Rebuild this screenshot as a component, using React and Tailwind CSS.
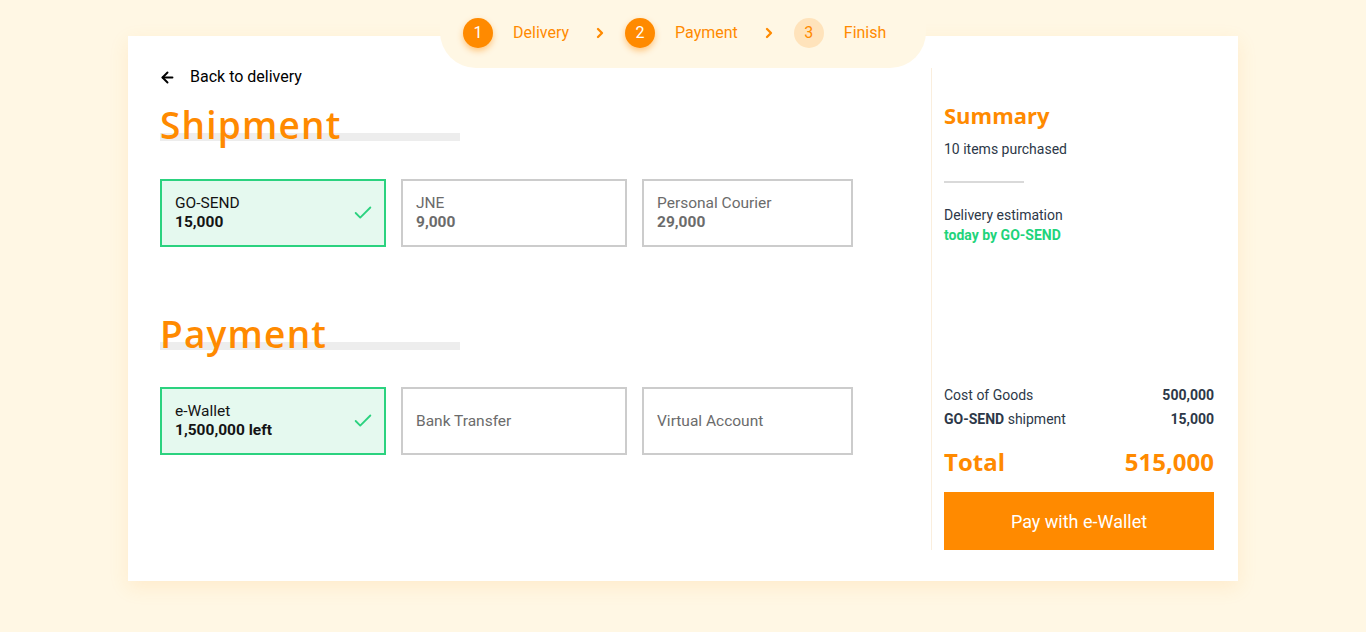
import React from 'react';
import { ArrowLeft, Check, ChevronRight } from 'lucide-react';

const heading = { fontFamily: '"Open Sans", sans-serif' };

const Step = ({ n, label, active }) => (
  <div className="flex items-center">
    <div
      className={
        active
          ? 'w-[30px] h-[30px] rounded-full bg-[#ff8a00] text-white flex items-center justify-center text-[16px] shadow-[0_3px_6px_rgba(255,138,0,0.45)]'
          : 'w-[30px] h-[30px] rounded-full bg-[#ffe3bb] text-[#ff8a00] flex items-center justify-center text-[16px]'
      }
    >
      {n}
    </div>
    <span className="ml-5 text-[16px] text-[#ff8a00]">{label}</span>
  </div>
);

const Option = ({ title, sub, selected, width }) => (
  <div
    className={
      (selected
        ? 'border-2 border-[#2bd27f] bg-[#e5f9ef] text-[#141414] '
        : 'border-2 border-[#cccccc] bg-white text-[#6b6b6b] ') +
      'h-[68px] pl-[13px] pr-[10px] flex items-center justify-between ' +
      width
    }
  >
    <div className="text-[15.5px] leading-[19px]">
      <div>{title}</div>
      {sub && <div className="font-bold">{sub}</div>}
    </div>
    {selected && <Check size={22} strokeWidth={2} className="text-[#2bd27f]" />}
  </div>
);

const SectionTitle = ({ children }) => (
  <div className="relative w-[300px] h-[36px]">
    <div className="absolute left-0 bottom-0 w-full h-2 bg-[#ededed]" />
    <h2
      className="relative text-[37px] leading-[40px] font-semibold tracking-[1.2px] text-[#ff8a00]"
      style={heading}
    >
      {children}
    </h2>
  </div>
);

export default function App() {
  return (
    <div
      className="min-h-[632px] bg-[#fff7e4] pt-9"
      style={{ fontFamily: 'Roboto, "Liberation Sans", sans-serif' }}
    >
      <div className="relative mx-auto w-[1110px] h-[545px] bg-white shadow-[0_6px_18px_rgba(255,170,60,0.14)] flex">
        {/* stepper tab */}
        <div className="absolute left-1/2 -translate-x-1/2 top-[-36px] w-[486px] h-[68px] bg-[#fff7e4] rounded-b-[36px] pl-[23px] pt-[18px]">
          <div className="flex items-center h-[30px]">
            <Step n="1" label="Delivery" active />
            <ChevronRight size={16} strokeWidth={3.5} className="text-[#ff8a00] ml-[23px] mr-[17px]" />
            <Step n="2" label="Payment" active />
            <ChevronRight size={16} strokeWidth={3.5} className="text-[#ff8a00] ml-[23px] mr-[17px]" />
            <Step n="3" label="Finish" />
          </div>
        </div>

        {/* left column */}
        <div className="w-[803px] pl-8 pt-[31px]">
          <div className="flex items-center h-5 text-[16px] text-black">
            <ArrowLeft size={17} strokeWidth={2.75} className="-ml-px" />
            <span className="ml-[14px]">Back to delivery</span>
          </div>

          <div className="mt-[18px]">
            <SectionTitle>Shipment</SectionTitle>
          </div>
          <div className="mt-[38px] flex gap-[15px]">
            <Option title="GO-SEND" sub="15,000" selected width="w-[226px]" />
            <Option title="JNE" sub="9,000" width="w-[226px]" />
            <Option title="Personal Courier" sub="29,000" width="w-[211px]" />
          </div>

          <div className="mt-[67px]">
            <SectionTitle>Payment</SectionTitle>
          </div>
          <div className="mt-[37px] flex gap-[15px]">
            <Option title="e-Wallet" sub="1,500,000 left" selected width="w-[226px]" />
            <Option title="Bank Transfer" width="w-[226px]" />
            <Option title="Virtual Account" width="w-[211px]" />
          </div>
        </div>

        {/* summary column */}
        <div className="w-[307px] mt-8 mb-[31px] border-l border-[#faeedd] pl-3 pr-6 pt-[33px] flex flex-col text-[#2d3848]">
          <h3 className="text-[22px] leading-[28px] font-bold text-[#ff8a00]" style={heading}>
            Summary
          </h3>
          <p className="mt-[10px] text-[14px] leading-5">10 items purchased</p>
          <div className="mt-[22px] w-20 h-[2px] bg-[#d9d9d9]" />
          <p className="mt-[23px] text-[14px] leading-[18px]">Delivery estimation</p>
          <p className="mt-[2px] text-[14px] leading-[18px] font-bold text-[#1ed47b]">today by GO-SEND</p>

          <div className="mt-auto">
            <div className="flex justify-between text-[14px] leading-5">
              <span>Cost of Goods</span>
              <span className="font-bold">500,000</span>
            </div>
            <div className="mt-1 flex justify-between text-[14px] leading-5">
              <span>
                <span className="font-bold">GO-SEND</span> shipment
              </span>
              <span className="font-bold">15,000</span>
            </div>
            <div
              className="mt-[17px] flex justify-between text-[24px] leading-8 font-bold text-[#ff8a00]"
              style={heading}
            >
              <span>Total</span>
              <span>515,000</span>
            </div>
            <button className="mt-[14px] w-full h-[58px] bg-[#ff8a00] text-white text-[18px]">
              Pay with e-Wallet
            </button>
          </div>
        </div>
      </div>
    </div>
  );
}
